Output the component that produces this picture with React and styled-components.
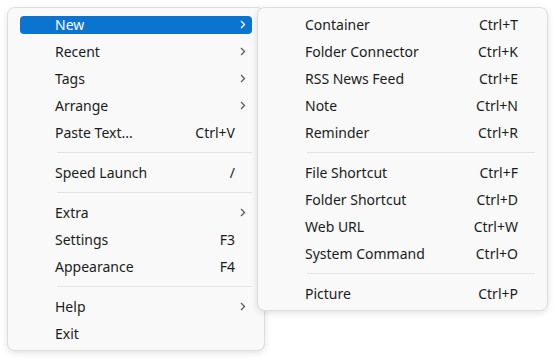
import React from 'react';
import styled, { createGlobalStyle } from 'styled-components';

const Global = createGlobalStyle`
  html, body {
    margin: 0;
    padding: 0;
    background: #ffffff;
  }
  body {
    font-family: "Noto Sans", "Open Sans", sans-serif;
    color: #1b1b1b;
  }
`;

const Stage = styled.div`
  position: relative;
  width: 556px;
  height: 362px;
  padding: 7px;
  box-sizing: border-box;
`;

const Menu = styled.div`
  width: ${(p) => p.$width}px;
  box-sizing: border-box;
  padding: 3px 0;
  background: #f9f9f9;
  border: 1px solid #dedede;
  border-radius: 8px;
  box-shadow: 0 2px 6px rgba(0, 0, 0, 0.12);
`;

const SubMenu = styled(Menu)`
  position: absolute;
  top: 7px;
  left: 257px;
`;

const Row = styled.div`
  height: 27px;
  display: flex;
  align-items: center;
  margin: 0 12px 0 12px;
`;

const Item = styled.div`
  flex: 1;
  height: 18px;
  display: grid;
  grid-template-columns: 1fr auto 11px;
  align-items: center;
  padding: 0 6px 0 35px;
  border-radius: 4px;
  font-size: 14px;
  line-height: 18px;
  background: ${(p) => (p.$active ? '#0b74d1' : 'transparent')};
  color: ${(p) => (p.$active ? '#ffffff' : '#1b1b1b')};
`;

const Label = styled.span`
  white-space: nowrap;
`;

const Shortcut = styled.span`
  white-space: nowrap;
  text-align: right;
`;

const Arrow = styled.span`
  display: flex;
  justify-content: flex-end;
  align-items: center;
`;

const Separator = styled.div`
  height: 1px;
  margin: 6px 12px 6px 49px;
  background: #e3e3e3;
`;

const Chevron = ({ active }) => (
  <svg width="6" height="9" viewBox="0 0 6 9">
    <path
      d="M1 1 L4.5 4.5 L1 8"
      fill="none"
      stroke={active ? '#ffffff' : '#5a5a5a'}
      strokeWidth="1.3"
    />
  </svg>
);

const mainItems = [
  { label: 'New', sub: true, active: true },
  { label: 'Recent', sub: true },
  { label: 'Tags', sub: true },
  { label: 'Arrange', sub: true },
  { label: 'Paste Text...', key: 'Ctrl+V' },
  '-',
  { label: 'Speed Launch', key: '/' },
  '-',
  { label: 'Extra', sub: true },
  { label: 'Settings', key: 'F3' },
  { label: 'Appearance', key: 'F4' },
  '-',
  { label: 'Help', sub: true },
  { label: 'Exit' },
];

const newItems = [
  { label: 'Container', key: 'Ctrl+T' },
  { label: 'Folder Connector', key: 'Ctrl+K' },
  { label: 'RSS News Feed', key: 'Ctrl+E' },
  { label: 'Note', key: 'Ctrl+N' },
  { label: 'Reminder', key: 'Ctrl+R' },
  '-',
  { label: 'File Shortcut', key: 'Ctrl+F' },
  { label: 'Folder Shortcut', key: 'Ctrl+D' },
  { label: 'Web URL', key: 'Ctrl+W' },
  { label: 'System Command', key: 'Ctrl+O' },
  '-',
  { label: 'Picture', key: 'Ctrl+P' },
];

const renderItems = (items) =>
  items.map((it, i) =>
    it === '-' ? (
      <Separator key={i} />
    ) : (
      <Row key={i}>
        <Item $active={it.active}>
          <Label>{it.label}</Label>
          <Shortcut>{it.key}</Shortcut>
          <Arrow>{it.sub && <Chevron active={it.active} />}</Arrow>
        </Item>
      </Row>
    )
  );

export default function App() {
  return (
    <Stage>
      <Global />
      <Menu $width={258}>{renderItems(mainItems)}</Menu>
      <SubMenu $width={291}>{renderItems(newItems)}</SubMenu>
    </Stage>
  );
}
